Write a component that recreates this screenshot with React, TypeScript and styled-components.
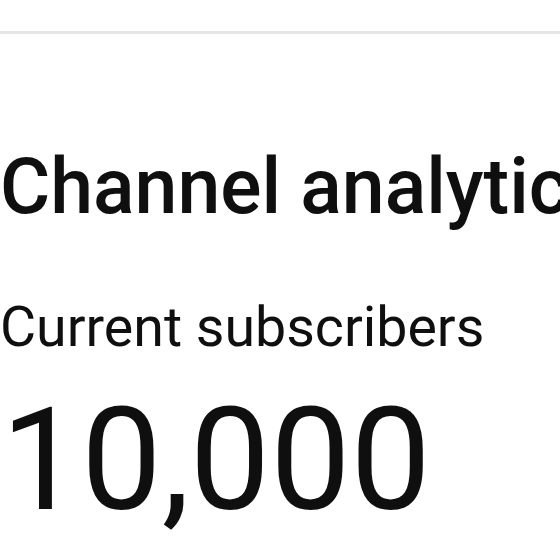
import React from 'react';
import styled, { createGlobalStyle } from 'styled-components';

const GlobalStyle = createGlobalStyle`
    html, body {
        margin: 0;
        padding: 0;
        background: #ffffff;
        overflow: hidden;
    }
    body {
        font-family: Roboto, "Noto Sans", Arial, sans-serif;
        color: #0f0f0f;
    }
`;

const App = () => {
    return (
        <>
            <GlobalStyle />
            <Page>
                <TopBar />
                <Content>
                    <Title>Channel analytics</Title>
                    <MetricLabel>Current subscribers</MetricLabel>
                    <MetricValue>10,000</MetricValue>
                </Content>
            </Page>
        </>
    );
};

const Page = styled.div`
    width: 560px;
    height: 560px;
    overflow: hidden;
`;

const TopBar = styled.div`
    height: 31px;
    border-bottom: 3px solid #e5e5e5;
`;

const Content = styled.div`
    padding: 115px 0 0 0;
    white-space: nowrap;
`;

const Title = styled.h1`
    margin: 0;
    font-size: 77px;
    line-height: 77px;
    font-weight: 500;
`;

const MetricLabel = styled.div`
    margin-top: 74px;
    font-size: 55.5px;
    line-height: 55.5px;
    font-weight: 400;
`;

const MetricValue = styled.div`
    margin-top: 33px;
    padding-left: 1px;
    font-size: 143px;
    line-height: 143px;
    font-weight: 400;
`;

export default App;
